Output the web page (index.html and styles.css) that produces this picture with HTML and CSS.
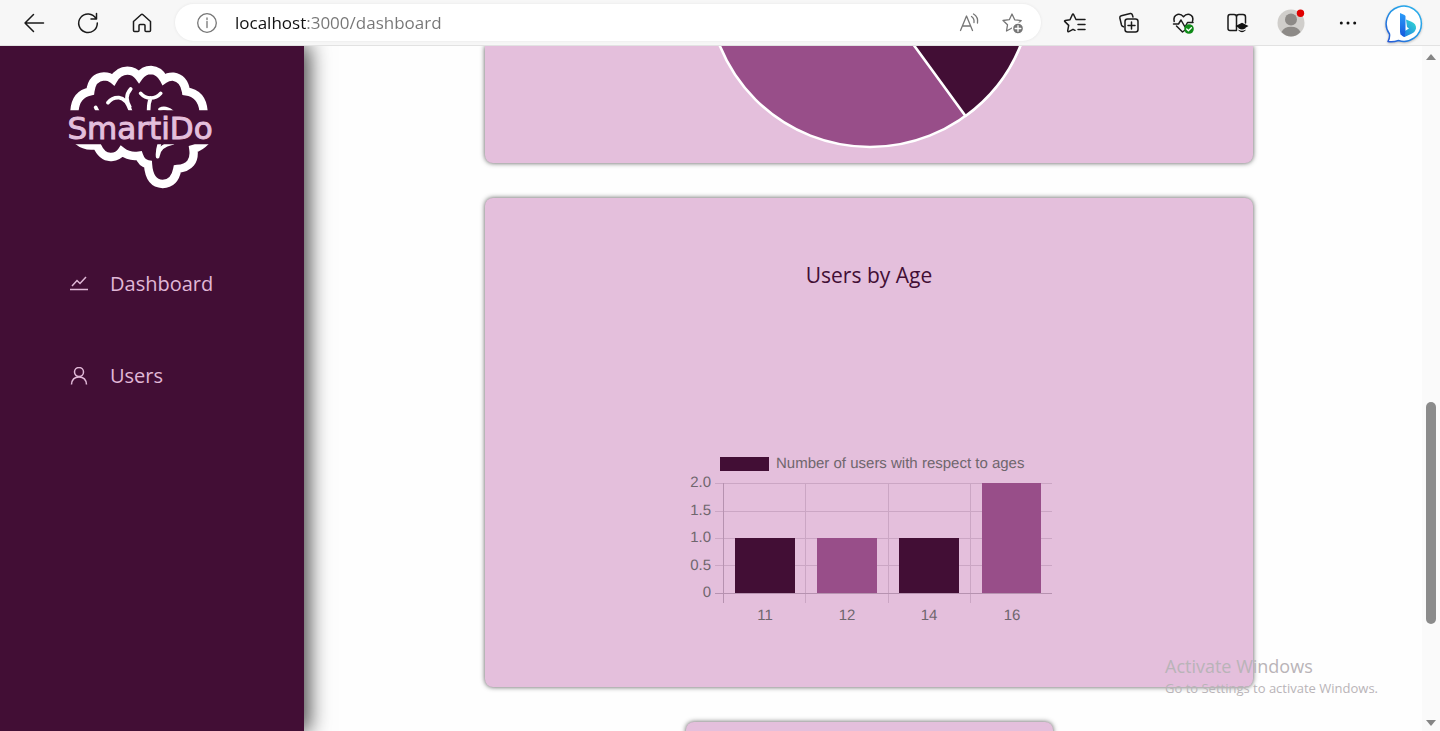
FILE: index.html
```html
<!DOCTYPE html>
<html lang="en">
<head>
<meta charset="utf-8">
<meta name="viewport" content="width=device-width, initial-scale=1">
<title>SmartiDo dashboard</title>
<link rel="stylesheet" href="styles.css">
</head>
<body>
<header class="toolbar">
  <button class="tool" aria-label="Back"><svg width="28" height="28" viewBox="0 0 28 28"><path d="M23.500 14H5M13.500 5.500 5 14l8.500 8.500"/></svg></button>
  <button class="tool" aria-label="Refresh"><svg width="28" height="28" viewBox="0 0 28 28"><path d="M22 9.500A9.300 9.300 0 1 0 23.300 14M22.500 4.500v5.500H17"/></svg></button>
  <button class="tool" aria-label="Home"><svg width="28" height="28" viewBox="0 0 28 28"><path d="M5.500 12.500 13 5.700q1-.9 2 0l7.500 6.800v9q0 1-1 1H18q-1 0-1-1v-5q0-1-1-1h-4q-1 0-1 1v5q0 1-1 1H6.500q-1 0-1-1z"/></svg></button>
  <form class="address">
    <button class="address-icon" type="button" aria-label="Site information"><svg width="24" height="24" viewBox="0 0 24 24"><circle cx="12" cy="12" r="9.300"/><path d="M12 10.500v6M12 7v1.500"/></svg></button>
    <input class="url" type="text" aria-label="Address" value="localhost:3000/dashboard">
    <button class="address-icon" type="button" aria-label="Read aloud"><svg width="24" height="24" viewBox="0 0 24 24"><path d="M3.500 19.500 9.500 5l6 14.500M5.500 15h8M14.500 5.500q3 2 2.500 6M16.500 3q5 3 4 9"/></svg></button>
    <button class="address-icon" type="button" aria-label="Add to favorites"><svg width="24" height="24" viewBox="0 0 24 24"><path d="m11 3 2.700 5.800 6.500.8-4.800 4.300 1.200 6.100-5.600-3-5.500 3 1-6.200L2 9.500l6.300-.8z"/><circle class="fill-gray" cx="17" cy="17.500" r="5.500"/><path class="line-white" d="M17 14.700v5.600M14.200 17.500h5.600"/></svg></button>
  </form>
  <button class="tool" aria-label="Favorites"><svg width="28" height="28" viewBox="0 0 28 28"><path d="m15 10.500-2.300-4.800q-.7-1.200-1.400 0L9 10.700l-4.800.7q-1.200.3-.3 1.200l3.800 3.800-1 5.300q0 1.300 1.100.9l4.200-2.300 2 1M16 10.500h8M17 15.500h7M17 20.500h7"/></svg></button>
  <button class="tool" aria-label="Collections"><svg width="28" height="28" viewBox="0 0 28 28"><rect x="10" y="10" width="13" height="13" rx="2.500"/><path d="M16.500 13v7M13 16.500h7M18 8l-.7-2.200q-.5-1.500-2-1.200l-9 2.200q-1.700.5-1.500 2L6.500 16q.4 1.500 2 1.800"/></svg></button>
  <button class="tool" aria-label="Browser essentials"><svg width="28" height="28" viewBox="0 0 28 28"><path d="M5.200 12.500Q4 7 8.500 5.500q3.500-.8 6 2.300 2.500-3.100 6-2.300Q25 7 23.500 12.500M7.500 17l6 6 2-1.500M4.500 15h5l2.500-4 4 7 2.500-4.500h5.500"/><circle class="fill-green" cx="20" cy="20" r="4.800"/><path class="line-white" d="m17.700 20 1.700 1.700 3-3"/></svg></button>
  <button class="tool" aria-label="Reading list"><svg width="28" height="28" viewBox="0 0 28 28"><path d="M13.500 21.500H7q-2 0-2-2V8q0-2.500 2-2.500h4q2.500 0 2.500 2.500v13M13.500 8q0-2.500 2.500-2.500h4q2.500 0 2.500 2.500v6"/><path class="fill-black" d="m12.500 17 6.500-3.200 6.500 3.200-3 1.700v2.800q-3.500 3.500-7 0v-2.800z"/><path class="line-white" d="M15.500 20q3.500 2.200 7 0"/></svg></button>
  <button class="tool" aria-label="Profile"><svg width="28" height="28" viewBox="0 0 28 28"><circle class="avatar" cx="14" cy="14" r="13.500"/><circle class="avatar-body" cx="14" cy="10.500" r="6"/><path class="avatar-body" d="M4.500 23Q7 17.800 14 17.800T23.500 23Q19 27.500 14 27.500T4.500 23z"/><circle class="alert" cx="23.500" cy="4.300" r="3.700"/></svg></button>
  <button class="tool tool-wide" aria-label="Settings and more"><svg width="28" height="28" viewBox="0 0 28 28"><circle class="fill-black" cx="7.300" cy="14" r="1.500"/><circle class="fill-black" cx="14" cy="14" r="1.500"/><circle class="fill-black" cx="20.700" cy="14" r="1.500"/></svg></button>
  <button class="tool" aria-label="Discover"><svg width="40" height="40" viewBox="0 0 40 40">
    <defs><linearGradient id="ring" x1="0" y1="1" x2="1" y2="0"><stop offset="0" stop-color="#2554d6"/><stop offset=".5" stop-color="#2496e6"/><stop offset="1" stop-color="#2bb4ee"/></linearGradient>
    <linearGradient id="stem" x1="0" y1="0" x2="0" y2="1"><stop offset="0" stop-color="#2b9dfa"/><stop offset="1" stop-color="#1757dc"/></linearGradient>
    <linearGradient id="bowl" x1="1" y1="0" x2="0" y2="1"><stop offset="0" stop-color="#35dfd0"/><stop offset="1" stop-color="#1b6fe8"/></linearGradient></defs>
    <path class="bubble" stroke="url(#ring)" d="M3 38.500Q5 35 4.500 31A17.600 17.600 0 1 1 13.500 37.500Q8 39.500 3 38.500z"/>
    <path fill="url(#bowl)" stroke="none" d="m21 16.500 5.500 2.200Q31.500 21 31 25.500q-1 4-5 5.500l-6.500 3-4.500-3 9-5.500-2-1.500z"/>
    <path fill="url(#stem)" stroke="none" d="m15 10 4.500 2Q20.500 12.500 20.500 13.500v14l-1 6.500q-4-1.500-4.500-5z"/>
  </svg></button>
</header>

<div class="viewport">
  <aside class="sidebar">
    <svg class="logo" width="180" height="140" viewBox="0 0 180 140" role="img" aria-label="SmartiDo">
      <defs>
        <clipPath id="above"><path d="M0 0h540v166H0z"/></clipPath>
        <clipPath id="below"><path d="M0 268h540v152H0z"/></clipPath>
      </defs>
      <g transform="scale(.33333)">
        <g clip-path="url(#above)">
          <path class="brain" d="M73 175Q74 118 121 109Q126 66 162 64Q178 64 190 74Q206 47 232 47Q254 47 267 65Q281 45 303 45Q328 46 342 73Q355 64 370 65Q402 70 408 109Q459 116 461 175"/>
          <path class="fold" d="M174 143Q186 127 207 128Q230 130 243 172M242 102Q230 116 231 130Q232 144 239 155M272 115Q284 129 302 129Q320 129 332 115M302 129Q295 145 296 172M137 157l6 12M330 163Q346 155 366 170"/>
        </g>
        <g clip-path="url(#below)">
          <path class="brain" d="M78 252Q104 278 140 270Q156 308 184 306Q205 304 215 289Q238 307 267 302Q275 325 294 328Q298 386 338 387Q374 386 382 342Q438 336 430 282Q456 274 474 250"/>
          <path class="fold" d="M323 305Q321 288 329 264M323 305Q326 272 368 264"/>
        </g>
      </g>
      <text class="logo-text" x="90" y="84" text-anchor="middle">SmartiDo</text>
    </svg>
    <nav class="menu">
      <a class="menu-link" href="#dashboard"><svg width="18" height="18" viewBox="0 0 18 18"><path d="M0 14.500h18M2 11l5-5.500L10 8.500l6-6.500"/></svg>Dashboard</a>
      <a class="menu-link" href="#users"><svg width="18" height="18" viewBox="0 0 18 18"><circle cx="9" cy="5" r="4.500"/><path d="M1.500 17.500Q2 10 9 10t7.500 7.500"/></svg>Users</a>
    </nav>
  </aside>

  <main class="content">
    <section class="card card-pie">
      <svg class="pie" width="368" height="104" viewBox="0 0 368 104" role="img" aria-label="Pie chart">
        <circle class="slice-light" cx="185" cy="-61" r="162"/>
        <path class="slice-dark" d="M185-61V-223A162 162 0 0 1 280.500 70z"/>
      </svg>
    </section>
    <section class="card card-age">
      <h2 class="card-title">Users by Age</h2>
      <svg class="bars" width="368" height="180" viewBox="0 0 368 180" role="img" aria-label="Number of users with respect to ages">
        <rect class="bar-dark" x="35" y="17" width="49" height="14"/>
        <text x="91" y="28">Number of users with respect to ages</text>
        <path class="grid" d="M30 43.500h337M30 71.500h337M30 98.500h337M30 125.500h337M120.500 43v120M203.500 43v120M285.500 43v120"/>
        <path class="axis" d="M38.500 43v120M30 153.500h337"/>
        <rect class="bar-dark" x="50" y="98" width="60" height="55"/>
        <rect class="bar-light" x="132" y="98" width="60" height="55"/>
        <rect class="bar-dark" x="214" y="98" width="60" height="55"/>
        <rect class="bar-light" x="297" y="43" width="59" height="110"/>
        <g text-anchor="end"><text x="26" y="47">2.0</text><text x="26" y="75">1.5</text><text x="26" y="102">1.0</text><text x="26" y="130">0.5</text><text x="26" y="157">0</text></g>
        <g text-anchor="middle"><text x="80" y="180">11</text><text x="162" y="180">12</text><text x="244" y="180">14</text><text x="327" y="180">16</text></g>
      </svg>
    </section>
    <section class="card card-next"></section>
  </main>

  <div class="scrollbar" aria-hidden="true">
    <svg width="12" height="8" viewBox="0 0 12 8"><path d="M6 1 11 7H1z"/></svg>
    <div class="track-top"></div>
    <div class="thumb"></div>
    <div class="track-bottom"></div>
    <svg width="12" height="8" viewBox="0 0 12 8"><path d="M6 7 11 1H1z"/></svg>
  </div>
  <div class="watermark">
    <p class="watermark-title">Activate Windows</p>
    <p class="watermark-note">Go to Settings to activate Windows.</p>
  </div>
</div>
</body>
</html>
```

FILE: styles.css
```css
* { box-sizing: border-box; }

body {
  margin: 0;
  height: 100vh;
  display: flex;
  flex-direction: column;
  overflow: hidden;
  background: #fefefe;
  font-family: "Open Sans", "Noto Sans", sans-serif;
}

button {
  display: grid;
  place-items: center;
  padding: 0;
  border: 0;
  background: none;
}

/* Browser toolbar */
.toolbar {
  flex: none;
  display: flex;
  align-items: center;
  height: 46px;
  padding: 0 8px 0 7px;
  background: #f7f7f7;
  border-bottom: 1px solid #e2e2e2;
}
.tool { flex: none; width: 54px; height: 40px; }
.tool-wide { width: 60px; }
.tool svg, .address svg {
  fill: none;
  stroke: #1b1b1b;
  stroke-width: 1.5;
  stroke-linecap: round;
  stroke-linejoin: round;
}
.address {
  flex: 1;
  display: flex;
  align-items: center;
  height: 37px;
  margin: 0 7px 0 6px;
  padding: 0 16px 0 20px;
  gap: 20px;
  border-radius: 19px;
  background: #fff;
  box-shadow: 0 0 3px #e4e4e4;
}
.address svg { stroke: #767676; stroke-width: 1.3; }
.url {
  flex: 1;
  min-width: 0;
  margin-left: -4px;
  padding: 0;
  border: 0;
  font: 17px/24px "Open Sans", "Noto Sans", sans-serif;
  color: transparent;
  background: linear-gradient(to right, #111 71px, #757575 71px);
  -webkit-background-clip: text;
  background-clip: text;
}
.address .fill-gray { fill: #767676; stroke: #fff; }
.tool .fill-green { fill: #0f8a18; stroke: none; }
.tool .fill-black { fill: #111; stroke: none; }
.toolbar .line-white { stroke: #fff; stroke-width: 1.3; }
.tool .avatar { fill: #d0cecb; stroke: none; }
.tool .avatar-body { fill: #8d8a87; stroke: none; }
.tool .alert { fill: #e00000; stroke: none; }
.tool svg { overflow: visible; }
.bubble { fill: #fff; stroke-width: 1.5; filter: drop-shadow(0 1px 1px #bbb); }

/* Page */
.viewport {
  position: relative;
  flex: 1;
  min-height: 0;
  display: grid;
  grid-template-columns: 304px 1fr 18px;
}
.sidebar {
  background: #420e35;
  box-shadow: 4px 0 20px 1px #444;
  clip-path: inset(0 -50px 0 0);
}
.logo { display: block; margin: 9px 0 0 50px; }
.brain { fill: none; stroke: #fff; stroke-width: 25; }
.fold { fill: none; stroke: #fff; stroke-width: 11; stroke-linecap: round; }
.logo-text {
  font: 31px "DejaVu Sans", sans-serif;
  fill: #e4bfdc;
  stroke: #e4bfdc;
  stroke-width: 1;
}
.menu {
  display: flex;
  flex-direction: column;
  gap: 60px;
  padding: 73px 16px 0 70px;
}
.menu-link {
  display: flex;
  align-items: center;
  gap: 22px;
  font-size: 20px;
  line-height: 32px;
  color: #e0b8d7;
  text-decoration: none;
}
.menu-link svg { fill: none; stroke: #e0b8d7; stroke-width: 1.5; }

.content {
  display: flex;
  flex-direction: column;
  align-items: center;
  gap: 35px;
  min-height: 0;
  padding-left: 12px;
  overflow: hidden;
}
.card {
  flex: none;
  display: flex;
  flex-direction: column;
  align-items: center;
  width: 768px;
  max-width: 100%;
  background: #e4bfdc;
  border-radius: 8px;
  box-shadow: 0 0 5px #555;
}
.card-pie { padding-bottom: 13px; border-radius: 0 0 8px 8px; }
.pie { display: block; }
.slice-light, .bar-light { fill: #984e89; }
.slice-dark, .bar-dark { fill: #420e35; }
.slice-light, .slice-dark { stroke: #fff; stroke-width: 2.6; stroke-linejoin: round; }
.card-age { padding: 61px 0 67px; gap: 149px; }
.card-title {
  margin: 0;
  font-size: 21px;
  font-weight: 400;
  line-height: 32px;
  color: #420e35;
}
.bars { display: block; overflow: visible; }
.bars text {
  font: 15px "Liberation Sans", Arial, sans-serif;
  fill: #6f666d;
  text-rendering: geometricPrecision;
}
.grid { fill: none; stroke: #cba6c4; }
.axis { fill: none; stroke: #b692b0; }
.card-next { width: 367px; height: 120px; }

.scrollbar {
  display: flex;
  flex-direction: column;
  align-items: center;
  padding: 7px 0 4px;
  background: #fafafa;
}
.scrollbar svg { flex: none; fill: #858585; }
.track-top { flex: 341; }
.thumb { width: 10px; flex: 222; border-radius: 5px; background: #8b8b8b; }
.track-bottom { flex: 95; }

.watermark {
  position: absolute;
  right: 60px;
  bottom: 33px;
  width: 215px;
  color: #b9b4b8;
  white-space: nowrap;
}
.watermark p { margin: 0; }
.watermark-title { font-size: 18px; line-height: 24px; }
.watermark-note { font-size: 13px; line-height: 20px; }
```
